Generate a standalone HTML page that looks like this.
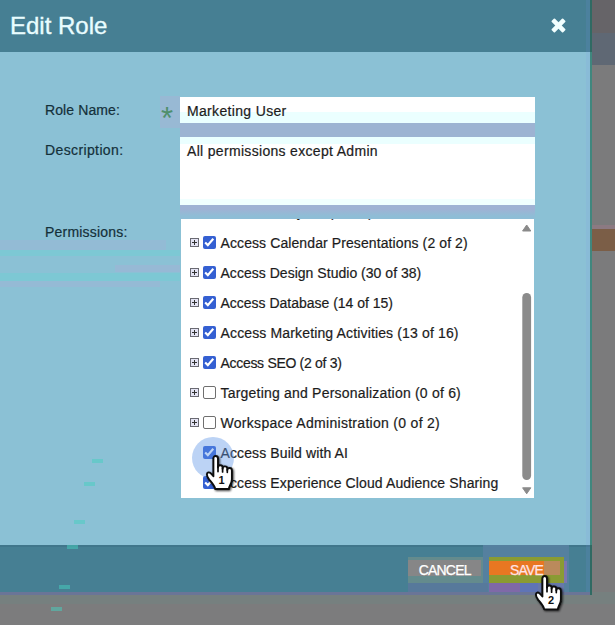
<!DOCTYPE html>
<html lang="en">
<head>
<meta charset="utf-8">
<title>Edit Role</title>
<style>
*{box-sizing:border-box;margin:0;padding:0}
html,body{width:615px;height:625px;overflow:hidden}
body{position:relative;background:#7a7a7b;font-family:"Liberation Sans",sans-serif;color:#1a1f24}
.abs{position:absolute}
/* page behind dialog */
.bg1{left:590px;top:0;width:25px;height:33px;background:#666468}
.bg2{left:590px;top:33px;width:25px;height:32px;background:#5f6874}
.bg3{left:590px;top:65px;width:25px;height:160px;background:#7b7b7c}
.bg4{left:590px;top:225px;width:25px;height:26px;background:#7b5e47;border-top:4px solid #8c7a82}
.bg5{left:590px;top:251px;width:25px;height:374px;background:#7b7b7c}
.bgb{left:0;top:592px;width:615px;height:33px;background:#7c7c7d;border-top:12px solid #76807f}
.bgs{left:0;top:592px;width:592px;height:3px;background:#6a7597}
.edge{left:590px;top:0;width:2px;height:595px;background:linear-gradient(#2f6a63 0,#2f6a63 52px,#3f877e 52px,#3f877e 545px,#2f6a63 545px)}
/* dialog */
.dlg{left:0;top:0;width:590px;height:592px;background:#8bc1d5}
.hdr{left:0;top:0;width:590px;height:52px;background:#467f93}
.ftr{left:0;top:545px;width:590px;height:47px;background:#467f93;border-top:2px solid #40768b}
.title{left:10px;top:10px;font-size:24px;line-height:32px;color:#e9fdff;white-space:nowrap;-webkit-text-stroke:.35px #e9fdff}
.lbl{-webkit-text-stroke:.2px;font-size:14px;line-height:20px;color:#14303a;white-space:nowrap}
.field{-webkit-text-stroke:.2px;background:#fff;font-size:14px;line-height:20px;color:#1c1c1c;white-space:nowrap}
.band{background:#9db3d2}
.row{-webkit-text-stroke:.2px;left:0;width:340px;height:30px;font-size:14px;line-height:30px;white-space:nowrap;color:#1c1c1c}
.row .t{position:absolute;left:39.5px;top:0}
.ex{position:absolute;left:9px;top:10px;width:9px;height:9px;border:1px solid #6a6a72;background:#e4e4f4}
.ex:before{content:"";position:absolute;left:1px;top:3px;width:5px;height:1px;background:#333}
.ex:after{content:"";position:absolute;left:3px;top:1px;width:1px;height:5px;background:#333}
.cb{position:absolute;left:22px;top:8px;width:13px;height:13px;border-radius:2px}
.cb.on{background:#3560d2}
.cb.on:after{content:"";position:absolute;left:0;top:0;width:13px;height:13px;background:#fff;clip-path:polygon(1.4px 7.3px,2.9px 5.8px,4.8px 7.6px,9.5px 2px,11.1px 3.4px,4.9px 10.7px)}
.cb.off{background:#fff;border:1px solid #6f6f6f}
.btn{height:26px;width:75px;top:557px;color:#fff;font-size:14px;letter-spacing:-.8px;-webkit-text-stroke:.25px;line-height:26px;text-align:center;white-space:nowrap}
</style>
</head>
<body>
<div class="abs bg1"></div><div class="abs bg2"></div><div class="abs bg3"></div><div class="abs bg4"></div><div class="abs bg5"></div>
<div class="abs bgb"></div><div class="abs bgs"></div><div class="abs edge"></div><div class="abs" style="left:586px;top:0;width:4px;height:592px;background:rgba(120,150,230,.13);z-index:3"></div>
<div class="abs dlg"></div>
<div class="abs hdr"></div>
<div class="abs ftr"></div>
<div class="abs" style="left:0;top:240px;width:166px;height:10px;background:#9bb6d5;opacity:.55"></div>
<div class="abs" style="left:0;top:250px;width:180px;height:6px;background:#70cfd4;opacity:.5"></div>
<div class="abs" style="left:115px;top:265px;width:65px;height:7px;background:#a3b3d6;opacity:.55"></div>
<div class="abs" style="left:0;top:273px;width:180px;height:8px;background:#70cfd4;opacity:.5"></div>
<div class="abs" style="left:0;top:281px;width:160px;height:6px;background:#a0b4d6;opacity:.5"></div>
<div class="abs" style="left:92px;top:459px;width:11px;height:4px;background:#45cfc0;opacity:.5"></div>
<div class="abs" style="left:84px;top:482px;width:11px;height:4px;background:#45cfc0;opacity:.5"></div>
<div class="abs" style="left:74px;top:520px;width:11px;height:4px;background:#45cfc0;opacity:.5"></div>
<div class="abs" style="left:67px;top:545px;width:11px;height:4px;background:#45cfc0;opacity:.5"></div>
<div class="abs" style="left:59px;top:585px;width:11px;height:4px;background:#45cfc0;opacity:.5"></div>
<div class="abs" style="left:51px;top:607px;width:11px;height:4px;background:#45cfc0;opacity:.5"></div>
<div class="abs title">Edit Role</div>
<svg class="abs" style="left:549.7px;top:17.3px" width="17" height="17" viewBox="0 0 17 17"><g transform="translate(8.5 8.5) rotate(45)" fill="#f2ffff"><rect x="-8.1" y="-2.3" width="16.2" height="4.6" rx="0.9"/><rect x="-2.3" y="-8.1" width="4.6" height="16.2" rx="0.9"/></g></svg>

<div class="abs" style="left:160px;top:96px;width:20px;height:32px;background:#98b9d4"></div>
<div class="abs lbl" style="left:45px;top:100px;letter-spacing:.1px">Role Name:</div>
<div class="abs" style="left:161px;top:103px;font-size:31px;line-height:32px;color:#4f8f6c">*</div>
<div class="abs lbl" style="left:45px;top:140px;letter-spacing:.38px">Description:</div>
<div class="abs lbl" style="left:45px;top:222px;letter-spacing:.2px">Permissions:</div>

<div class="abs band" style="left:180px;top:123px;width:355px;height:14px"></div>
<div class="abs" style="left:180px;top:205px;width:355px;height:14px;background:linear-gradient(#9fb2d4 0,#9fb2d4 30%,#8ebdd6 80%)"></div>
<div class="abs field" style="left:180px;top:97px;width:355px;height:26px;background:linear-gradient(#fff 0,#fff 15px,#ebffff 15px);padding:4px 7px 2px;letter-spacing:0.336px">Marketing User</div>
<div class="abs field" style="left:180px;top:137px;width:355px;height:68px;background:linear-gradient(#ebffff 0,#ebffff 7px,#fff 7px,#fff 62px,#f0ffff 62px);padding:4px 7px;letter-spacing:0.318px">All permissions except Admin</div>

<div class="abs" style="left:181px;top:219px;width:353px;height:279px;background:#fff;overflow:hidden">
  <div class="abs row" style="top:-22px"><span class="t">Access Analytics (7 of 7)</span></div>
  <div class="abs row" style="top:9px"><i class="ex"></i><i class="cb on"></i><span class="t" style="letter-spacing:0.097px">Access Calendar Presentations (2 of 2)</span></div>
  <div class="abs row" style="top:39px"><i class="ex"></i><i class="cb on"></i><span class="t" style="letter-spacing:0.026px">Access Design Studio (30 of 38)</span></div>
  <div class="abs row" style="top:69px"><i class="ex"></i><i class="cb on"></i><span class="t" style="letter-spacing:-0.012px">Access Database (14 of 15)</span></div>
  <div class="abs row" style="top:99px"><i class="ex"></i><i class="cb on"></i><span class="t" style="letter-spacing:0.145px">Access Marketing Activities (13 of 16)</span></div>
  <div class="abs row" style="top:129px"><i class="ex"></i><i class="cb on"></i><span class="t" style="letter-spacing:-0.305px">Access SEO (2 of 3)</span></div>
  <div class="abs row" style="top:159px"><i class="ex"></i><i class="cb off"></i><span class="t" style="letter-spacing:0.205px">Targeting and Personalization (0 of 6)</span></div>
  <div class="abs row" style="top:189px"><i class="ex"></i><i class="cb off"></i><span class="t" style="letter-spacing:0.294px">Workspace Administration (0 of 2)</span></div>
  <div class="abs row" style="top:219px"><i class="cb on"></i><span class="t" style="letter-spacing:0.110px">Access Build with AI</span></div>
  <div class="abs row" style="top:249px"><i class="cb on"></i><span class="t" style="letter-spacing:0.117px">Access Experience Cloud Audience Sharing</span></div>
  <svg class="abs" style="left:339px;top:0" width="15" height="279" viewBox="0 0 15 279">
    <path d="M2.6 12 L6.7 6 L10.8 12 Z" fill="#8a8a8a" stroke="#8a8a8a" stroke-width="1" stroke-linejoin="round"/>
    <rect x="2.3" y="74" width="8.8" height="187" rx="4.4" fill="#8b8b8b"/>
    <path d="M2.6 268.8 L10.8 268.8 L6.7 274.8 Z" fill="#8a8a8a" stroke="#8a8a8a" stroke-width="1" stroke-linejoin="round"/>
  </svg>
</div>

<div class="abs" style="left:483px;top:545px;width:86px;height:47px;background:#55809f"></div>
<div class="abs" style="left:408px;top:583px;width:80px;height:9px;background:#57799b"></div>
<div class="abs" style="left:489px;top:583px;width:31px;height:9px;background:#7f69a8"></div>
<div class="abs" style="left:520px;top:583px;width:44px;height:9px;background:linear-gradient(90deg,#5f74b6 0,#5f74b6 18px,#6778aa 18px)"></div>
<div class="abs" style="left:564px;top:561px;width:3px;height:22px;background:#7d76ad"></div>
<div class="abs" style="left:408px;top:557px;width:75px;height:26px;background:#648b8d"></div>
<div class="abs btn" style="left:408px;top:560px;width:73px;height:16px;line-height:16px;background:#868687"><span style="position:relative;top:2px;left:.2px">CANCEL</span></div>
<div class="abs" style="left:489px;top:557px;width:75px;height:26px;background:#8a9b33"></div>
<div class="abs" style="left:489px;top:561px;width:71px;height:14px;background:linear-gradient(90deg,#e87722 0,#e87722 55px,#ba8a5c 55px)"></div>
<div class="abs btn" style="left:489px;top:557px;width:75px;color:#ffe4e6"><span style="position:relative;top:0;left:0">SAVE</span></div>
<div class="abs" style="left:192px;top:437px;width:42px;height:42px;border-radius:50%;background:rgba(96,150,232,.42)"></div>
<svg class="abs" style="left:203px;top:451.6px;overflow:visible" width="34" height="43.2" viewBox="-3 -3 34 42" preserveAspectRatio="none">
  <defs><filter id="sh1" x="-30%" y="-30%" width="170%" height="170%"><feGaussianBlur in="SourceAlpha" stdDeviation="1.1"/><feOffset dx="0.6" dy="1.2"/><feComponentTransfer><feFuncA type="linear" slope="0.75"/></feComponentTransfer><feMerge><feMergeNode/><feMergeNode in="SourceGraphic"/></feMerge></filter></defs>
  <path filter="url(#sh1)" d="M7.4 3.4 C7.4 1.7 8.4 0.9 9.7 0.9 C11 0.9 12 1.7 12 3.4 L12 12 C12 10.6 13 9.9 14.2 9.9 C15.5 9.9 16.6 10.6 16.6 12.1 L16.6 13.2 C16.6 11.8 17.7 11 18.9 11 C20.2 11 21.3 11.8 21.3 13.3 L21.3 14.6 C21.3 13.3 22.3 12.6 23.5 12.6 C24.8 12.6 25.9 13.4 25.9 15 L25.9 23.5 C25.9 27.5 23.3 29.3 22.8 33 L9.2 33 C8.6 29.6 5.6 26.8 3.2 23.8 C1.7 21.8 0.9 20.3 0.9 18.8 C0.9 17.1 2.6 16.3 4 17.2 C5.3 18 6.4 19.3 7.4 20.6 Z" fill="#fff" stroke="#0b0b0b" stroke-width="1.9" stroke-linejoin="round"/>
  <path d="M12 11.5 L12 16 M16.6 12.8 L16.6 16.4 M21.3 14.2 L21.3 16.8" stroke="#0b0b0b" stroke-width="1.7" stroke-linecap="round" fill="none"/>
  <text x="15.6" y="28.2" font-family="Liberation Sans, sans-serif" font-weight="bold" font-size="11" text-anchor="middle" fill="#111">1</text>
</svg>
<svg class="abs" style="left:532.3px;top:571.7px;overflow:visible" width="34" height="43.6" viewBox="-3 -3 34 42" preserveAspectRatio="none">
  <defs><filter id="sh2" x="-30%" y="-30%" width="170%" height="170%"><feGaussianBlur in="SourceAlpha" stdDeviation="1.1"/><feOffset dx="0.6" dy="1.2"/><feComponentTransfer><feFuncA type="linear" slope="0.75"/></feComponentTransfer><feMerge><feMergeNode/><feMergeNode in="SourceGraphic"/></feMerge></filter></defs>
  <path filter="url(#sh2)" d="M7.4 3.4 C7.4 1.7 8.4 0.9 9.7 0.9 C11 0.9 12 1.7 12 3.4 L12 12 C12 10.6 13 9.9 14.2 9.9 C15.5 9.9 16.6 10.6 16.6 12.1 L16.6 13.2 C16.6 11.8 17.7 11 18.9 11 C20.2 11 21.3 11.8 21.3 13.3 L21.3 14.6 C21.3 13.3 22.3 12.6 23.5 12.6 C24.8 12.6 25.9 13.4 25.9 15 L25.9 23.5 C25.9 27.5 23.3 29.3 22.8 33 L9.2 33 C8.6 29.6 5.6 26.8 3.2 23.8 C1.7 21.8 0.9 20.3 0.9 18.8 C0.9 17.1 2.6 16.3 4 17.2 C5.3 18 6.4 19.3 7.4 20.6 Z" fill="#fff" stroke="#0b0b0b" stroke-width="1.9" stroke-linejoin="round"/>
  <path d="M12 11.5 L12 16 M16.6 12.8 L16.6 16.4 M21.3 14.2 L21.3 16.8" stroke="#0b0b0b" stroke-width="1.7" stroke-linecap="round" fill="none"/>
  <text x="16" y="27.8" font-family="Liberation Sans, sans-serif" font-weight="bold" font-size="11" text-anchor="middle" fill="#111">2</text>
</svg>
</body>
</html>
